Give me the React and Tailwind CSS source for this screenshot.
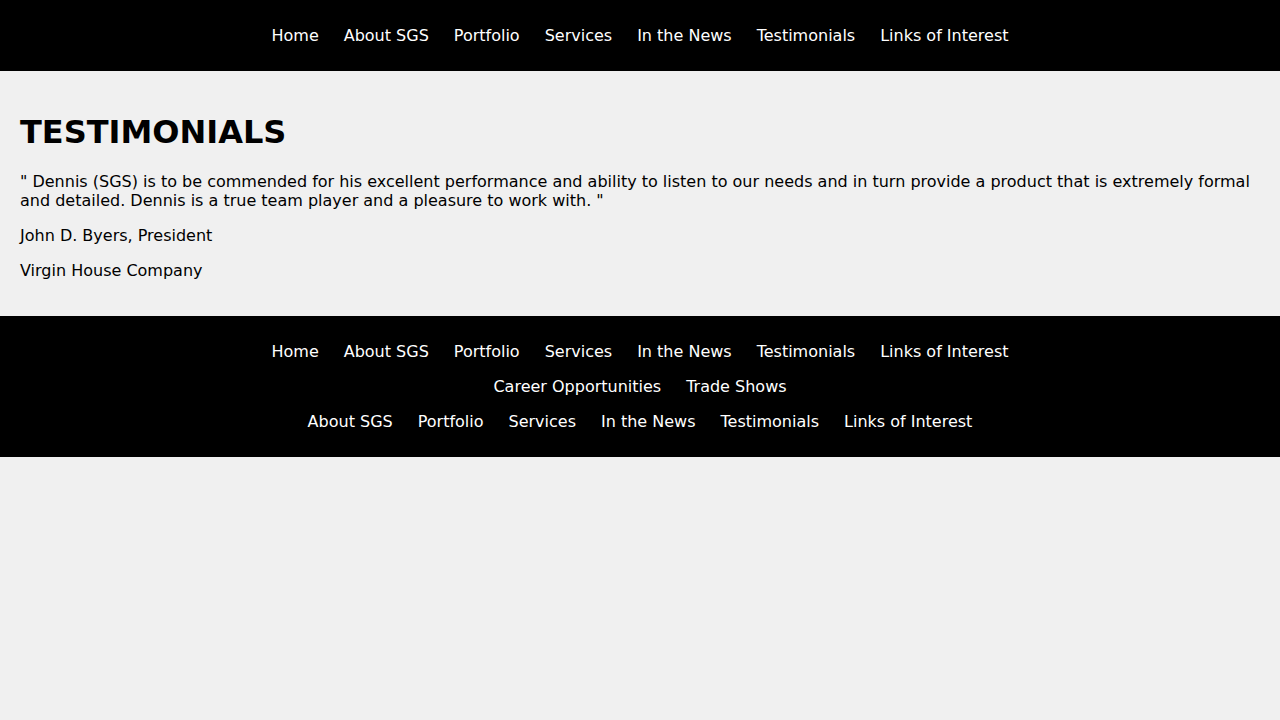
export default function App() {
  const main = ["Home", "About SGS", "Portfolio", "Services", "In the News", "Testimonials", "Links of Interest"];
  const row2 = ["Career Opportunities", "Trade Shows"];
  const row3 = ["About SGS", "Portfolio", "Services", "In the News", "Testimonials", "Links of Interest"];
  const Row = ({ items }) => (
    <div className="flex justify-center gap-[25px] my-4 leading-[19px]">
      {items.map((t, i) => (
        <a key={i} href="#" className="text-white no-underline">{t}</a>
      ))}
    </div>
  );
  return (
    <div className="min-h-[720px] bg-[#f0f0f0] text-[16px] text-black" style={{ fontFamily: '"DejaVu Sans", sans-serif' }}>
      <header className="bg-black py-[10px] flow-root">
        <Row items={main} />
      </header>
      <main className="p-5 flow-root">
        <h1 className="text-[32px] font-bold leading-[37px] mt-[22.5px] mb-[21.44px]">TESTIMONIALS</h1>
        <p className="my-4 leading-[19px]">" Dennis (SGS) is to be commended for his excellent performance and ability to listen to our needs and in turn provide a product that is extremely formal and detailed. Dennis is a true team player and a pleasure to work with. "</p>
        <p className="my-4 leading-[19px]">John D. Byers, President</p>
        <p className="my-4 leading-[19px]">Virgin House Company</p>
      </main>
      <footer className="bg-black py-[10px] flow-root">
        <Row items={main} />
        <Row items={row2} />
        <Row items={row3} />
      </footer>
    </div>
  );
}
